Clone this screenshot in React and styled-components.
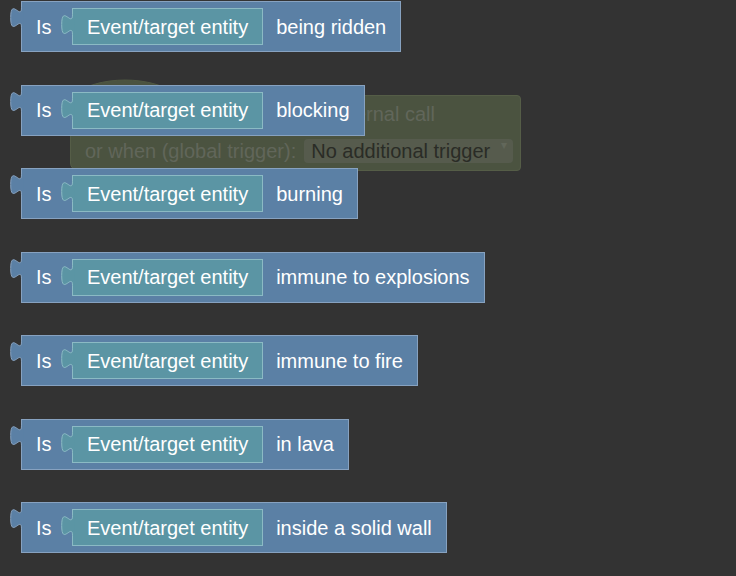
import React from 'react'
import styled, { createGlobalStyle } from 'styled-components'

const GlobalStyle = createGlobalStyle`
  html, body {
    margin: 0;
    background: #333333;
  }
  body {
    font-family: "Liberation Sans", Arial, sans-serif;
  }
`;

const Workspace = styled.div`
  position: relative;
  width: 736px;
  height: 576px;
  overflow: hidden;
  box-sizing: border-box;
  padding: 1px 0 0 21px;
  display: flex;
  flex-direction: column;
  align-items: flex-start;
  gap: 32.5px;
  background: #333333;
`;

// faded hat block lying behind the stack
const Ghost = styled.div`
  position: absolute;
  left: 70px;
  top: 95px;
  width: 451px;
  height: 76px;
  box-sizing: border-box;
  background: #4b5340;
  border: 1px solid #555d47;
  border-radius: 0 4px 4px 8px;
  display: flex;
  flex-direction: column;
  color: #61665a;
  font-size: 20px;
`;

const HatTop = styled.svg`
  position: absolute;
  left: -1px;
  top: -17px;
`;

const GhostRow = styled.div`
  display: flex;
  align-items: center;
  height: ${p => p.h}px;
  padding-left: ${p => p.indent}px;
  gap: 8px;
  line-height: 1;
  white-space: nowrap;
`;

const Dropdown = styled.div`
  position: relative;
  display: flex;
  align-items: center;
  height: 24px;
  width: 209px;
  box-sizing: border-box;
  padding-left: 7px;
  border-radius: 4px;
  background: #565b4d;
  color: #2a2c26;
  line-height: 1;
`;

const Caret = styled.span`
  position: absolute;
  right: 6px;
  top: 0;
  font-size: 12px;
  color: #62675a;
`;

const Block = styled.div`
  position: relative;
  display: flex;
  align-items: center;
  height: 51px;
  box-sizing: border-box;
  padding: 0 14px 0 14px;
  background: #5b80a5;
  border: 1px solid #87a2c0;
  color: #ffffff;
  font-size: 20px;
  line-height: 1;
  white-space: nowrap;
`;

const Slot = styled.div`
  position: relative;
  display: flex;
  align-items: center;
  height: 37px;
  box-sizing: border-box;
  padding: 0 14px;
  margin: 0 13px 0 20.4px;
  background: #5b95a4;
  border: 1px solid #8bbac4;
`;

const Tab = styled.svg`
  position: absolute;
  left: -12px;
  top: -1px;
  overflow: visible;
`;

function PuzzleTab({ fill, stroke }) {
  const curve = 'M11.5,6.5 c0,13.5 -10.8,-10.8 -10.8,10.1 s10.8,-3.4 10.8,10.1';
  return (
    <Tab width="14" height="30" viewBox="0 0 14 30">
      <path d={`${curve} H13.2 V6.5 Z`} fill={fill} />
      <path d={curve} fill="none" stroke={stroke} strokeWidth="1" />
    </Tab>
  );
}

const rows = [
  'being ridden',
  'blocking',
  'burning',
  'immune to explosions',
  'immune to fire',
  'in lava',
  'inside a solid wall',
];

function App() {
  return (
    <>
      <GlobalStyle />
      <Workspace>
        <Ghost>
          <HatTop width="114" height="19" viewBox="0 0 114 19">
            <path d="M0.5,18.5 V17 C28,-4.3 82,-4.3 110,17 V18.5 Z" fill="#4b5340" />
            <path d="M0.5,17 C28,-4.3 82,-4.3 110,17" fill="none" stroke="#505842" />
          </HatTop>
          <GhostRow h={36} indent={225}>On external call</GhostRow>
          <GhostRow h={38} indent={14}>
            or when (global trigger):
            <Dropdown>
              No additional trigger
              <Caret>▾</Caret>
            </Dropdown>
          </GhostRow>
        </Ghost>

        {rows.map(label => (
          <Block key={label}>
            <PuzzleTab fill="#5b80a5" stroke="#87a2c0" />
            Is
            <Slot>
              <PuzzleTab fill="#5b95a4" stroke="#8bbac4" />
              Event/target entity
            </Slot>
            {label}
          </Block>
        ))}
      </Workspace>
    </>
  );
}

export default App
